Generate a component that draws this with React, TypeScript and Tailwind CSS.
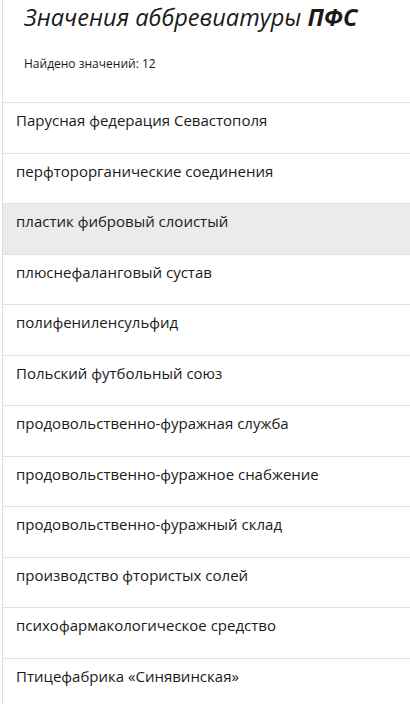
const items = [
  "Парусная федерация Севастополя",
  "перфторорганические соединения",
  "пластик фибровый слоистый",
  "плюснефаланговый сустав",
  "полифениленсульфид",
  "Польский футбольный союз",
  "продовольственно-фуражная служба",
  "продовольственно-фуражное снабжение",
  "продовольственно-фуражный склад",
  "производство фтористых солей",
  "психофармакологическое средство",
  "Птицефабрика «Синявинская»",
];

export default function App() {
  return (
    <div className="min-h-screen bg-white font-['Open_Sans',sans-serif] text-[#1a1a1a]">
      <div className="ml-[2px] border-l border-[#dddddd] min-h-screen">
        <h1 className="pl-[21px] pt-[1px] text-[23.6px] leading-[32px] italic">
          Значения аббревиатуры <b>ПФС</b>
        </h1>
        <p className="pl-[21px] mt-[22px] text-[12px] leading-[18px]">Найдено значений: 12</p>
        <ul className="mt-[29px]">
          {items.map((t, i) => (
            <li
              key={t}
              className={
                "h-[50.55px] border-t border-[#e0e0e0] pl-[13px] pt-[6px] text-[15px] leading-[22px] " +
                (i === 2 ? "bg-[#ebebeb]" : "")
              }
            >
              {t}
            </li>
          ))}
        </ul>
      </div>
    </div>
  );
}
